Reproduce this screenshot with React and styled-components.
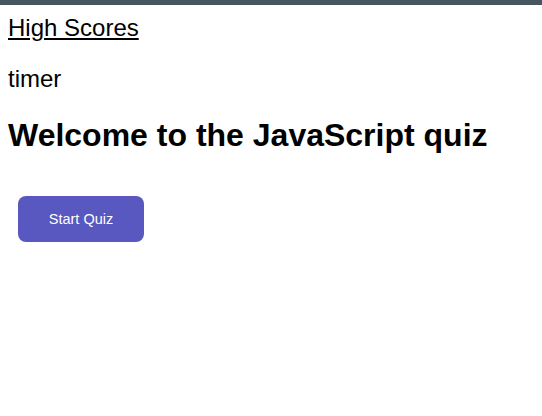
import React from "react";
import styled, { createGlobalStyle } from "styled-components";

const Global = createGlobalStyle`
  html, body { margin: 0; padding: 0; background: #fff; }
  body { font-family: "Liberation Sans", Arial, sans-serif; color: #000; }
`;

const TopBar = styled.div`
  height: 5px;
  background: #46565e;
`;

const Page = styled.div`
  padding: 0 8px;
`;

const Header = styled.header`
  display: flex;
  flex-direction: column;
  align-items: flex-start;
`;

const ScoresLink = styled.a`
  font-size: 24px;
  color: #000;
  text-decoration: underline;
  margin-top: 9px;
  line-height: 28px;
`;

const Timer = styled.div`
  font-size: 24px;
  line-height: 28px;
  margin-top: 23px;
`;

const Title = styled.h1`
  font-size: 32px;
  font-weight: bold;
  margin: 24px 0 0;
  line-height: 37px;
`;

const StartButton = styled.button`
  margin: 42px 0 0 10px;
  width: 126px;
  height: 46px;
  padding: 0;
  border: none;
  border-radius: 8px;
  background: #5858c0;
  color: #fff;
  font-family: "Liberation Sans", Arial, sans-serif;
  font-size: 14.5px;
  cursor: pointer;
`;

export default function App() {
  return (
    <>
      <Global />
      <TopBar />
      <Page>
        <Header>
          <ScoresLink href="#">High Scores</ScoresLink>
          <Timer>timer</Timer>
        </Header>
        <Title>Welcome to the JavaScript quiz</Title>
        <StartButton>Start Quiz</StartButton>
      </Page>
    </>
  );
}
